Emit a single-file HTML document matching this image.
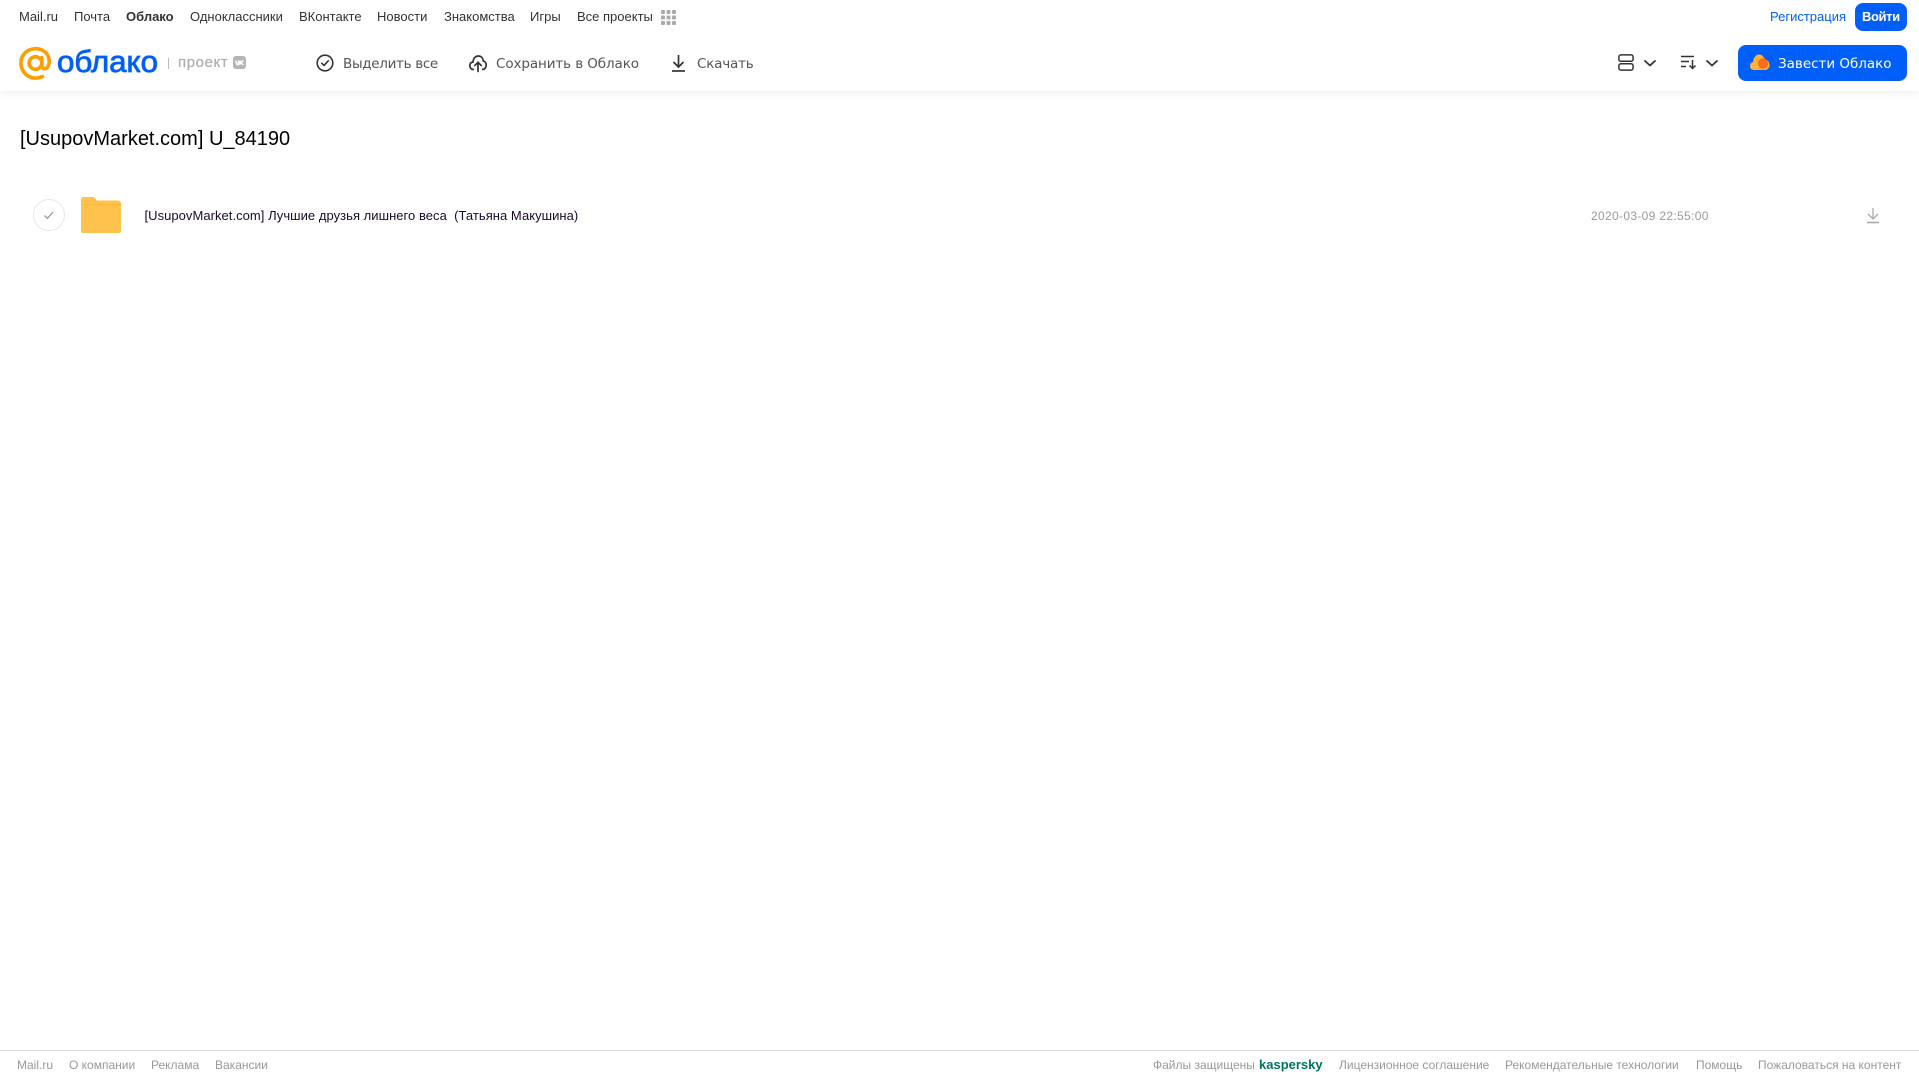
<!DOCTYPE html>
<html lang="ru"><head><meta charset="utf-8"><title>Облако</title>
<style>
html,body{margin:0;padding:0;background:#fff;overflow:hidden}
#p{position:relative;width:1919px;height:1079px;overflow:hidden;font-family:"Liberation Sans",sans-serif;background:#fff}
.t{position:absolute;white-space:pre;line-height:20px;height:20px}
.n{font-size:13px;color:#333;top:7px}
.a{color:#555;top:53.500px;font-family:"DejaVu Sans","Liberation Sans",sans-serif;font-size:13.5px;letter-spacing:-.02px}
.f{font-size:12px;color:#999;top:1055px}
svg{position:absolute;overflow:visible}
</style></head><body><div id="p">
<div style="position:absolute;left:0;top:0;width:1919px;height:91px;background:#fff;box-shadow:0 2px 8px rgba(0,0,0,.07)"></div>

<span class="t n" style="left:19px">Mail.ru</span>
<span class="t n" style="left:74px">Почта</span>
<span class="t n" style="left:126px;font-weight:bold">Облако</span>
<span class="t n" style="left:190px">Одноклассники</span>
<span class="t n" style="left:299px">ВКонтакте</span>
<span class="t n" style="left:377px">Новости</span>
<span class="t n" style="left:444px">Знакомства</span>
<span class="t n" style="left:530px">Игры</span>
<span class="t n" style="left:577px">Все проекты</span>
<svg style="left:661px;top:10px" width="15" height="15" fill="#aaa"><rect x="0" y="0" width="4" height="4" rx="1"/><rect x="5.5" y="0" width="4" height="4" rx="1"/><rect x="11" y="0" width="4" height="4" rx="1"/><rect x="0" y="5.500" width="4" height="4" rx="1"/><rect x="5.5" y="5.500" width="4" height="4" rx="1"/><rect x="11" y="5.500" width="4" height="4" rx="1"/><rect x="0" y="11" width="4" height="4" rx="1"/><rect x="5.5" y="11" width="4" height="4" rx="1"/><rect x="11" y="11" width="4" height="4" rx="1"/></svg>

<span class="t" style="left:1770px;top:7px;font-size:13px;color:#005ff9">Регистрация</span>
<div style="position:absolute;left:1855px;top:3px;width:52px;height:28px;border-radius:8px;background:#005ff9"></div>
<span class="t" style="left:1862px;top:7px;font-size:13px;color:#fff;font-weight:bold;letter-spacing:-.4px">Войти</span>

<!-- logo -->
<svg style="left:19px;top:47px" width="33" height="33" viewBox="0 0 33 33" fill="none">
<circle cx="16.500" cy="16" r="6.300" stroke="#ff9e00" stroke-width="3.600"/>
<path d="M22.800 10.500V18.500C22.800 22 27 23 29 19.500C31.500 14.500 30 8 25.500 4.500C19.500 0 10.500 1 5.500 6.500C0 12.500 1 22 7 27.500C11.500 31.500 18 32 23.500 29.500" stroke="#ff9e00" stroke-width="3.600" stroke-linecap="round"/>
</svg>
<svg style="left:57px;top:44px" width="104" height="38"><text x="0" y="28" font-family="Liberation Sans,sans-serif" font-size="31" fill="#005ff9" stroke="#005ff9" stroke-width=".8" textLength="101" lengthAdjust="spacingAndGlyphs">облако</text></svg>
<div style="position:absolute;left:168px;top:58px;width:1px;height:11px;background:#bbb"></div>
<span class="t" style="left:178px;top:53px;font-size:15px;color:#b0b0b0;letter-spacing:.6px;-webkit-text-stroke:.3px #b0b0b0">проект</span>
<div style="position:absolute;left:233px;top:56px;width:13px;height:13px;border-radius:3px;background:#b5b5b5"></div>
<svg style="left:233px;top:56px" width="13" height="13" fill="none" stroke="#fff" stroke-width="1.400"><path d="M2.500 4.500L4 8.500L5.500 8.500V4.500M10.500 4.500L7.500 6.500L10.500 8.800M7 4.500V8.800"/></svg>

<!-- toolbar -->
<svg style="left:316px;top:54px" width="18" height="18" fill="none" stroke="#333" stroke-width="1.600"><circle cx="9" cy="9" r="7.800"/><path d="M5.700 9.200L8 11.400L12.300 6.800" stroke-linecap="round" stroke-linejoin="round"/></svg>
<span class="t a" style="left:343px;letter-spacing:-.32px">Выделить все</span>
<svg style="left:469px;top:54px" width="18" height="18" fill="none" stroke="#333" stroke-width="1.700"><path d="M5 15.500H4.500C2 15.500 .8 13.500 .8 11.800C.8 9.800 2 8.300 4 8C4.300 4.300 6.500 2 9.300 2C12 2 14 4 14.300 7C16 7.300 17.200 9 17.200 11C17.200 13.500 15.800 15.500 13 15.500"/><path d="M9 17.500V8.500M5.800 11.500L9 8.300L12.200 11.500" stroke-linecap="round"/></svg>
<span class="t a" style="left:496px;letter-spacing:-.1px">Сохранить в Облако</span>
<svg style="left:671px;top:54px" width="15" height="18" fill="none" stroke="#333" stroke-width="1.700"><path d="M7.500 1V12.500M2.500 8L7.500 13L12.500 8"/><path d="M1 17H14"/></svg>
<span class="t a" style="left:697px;letter-spacing:-.2px">Скачать</span>

<!-- right controls -->
<svg style="left:1618px;top:54px" width="16" height="17" fill="none" stroke="#333" stroke-width="1.500"><rect x=".9" y=".9" width="14.200" height="6.400" rx="2"/><rect x=".9" y="9.700" width="14.200" height="6.400" rx="2"/></svg>
<svg style="left:1644px;top:60px" width="12" height="7" fill="none" stroke="#333" stroke-width="1.800" stroke-linecap="round" stroke-linejoin="round"><path d="M1 1L6 5.500L11 1"/></svg>
<svg style="left:1681px;top:55px" width="16" height="15" fill="none" stroke="#333" stroke-width="1.500"><path d="M0 1.500H13M0 6.500H8M0 11.500H5"/><path d="M11.500 5V13.500M8.500 10.500L11.500 13.500L14.500 10.500"/></svg>
<svg style="left:1706px;top:60px" width="12" height="7" fill="none" stroke="#333" stroke-width="1.800" stroke-linecap="round" stroke-linejoin="round"><path d="M1 1L6 5.500L11 1"/></svg>
<div style="position:absolute;left:1738px;top:45px;width:169px;height:36px;border-radius:8px;background:#005ff9"></div>
<svg style="left:1750px;top:54px" width="20" height="17"><path d="M4 16C1.500 16 0 14.200 0 12C0 10 1.200 8.500 3 8C3.500 3.500 6 .5 9 .5C12 .5 14 3 15 5.500C17.500 5.800 19.500 8 19.500 11C19.500 14 17.500 16 15 16Z" fill="#ffb13c"/><circle cx="13" cy="9.500" r="5.200" fill="#ff6a1f"/></svg>
<span class="t a" style="left:1778px;color:#fff">Завести Облако</span>

<!-- content -->
<span class="t" style="left:20px;top:126px;height:26px;line-height:26px;font-size:20px;color:#000">[UsupovMarket.com] U_84190</span>

<svg style="left:33px;top:199px" width="32" height="32" fill="none"><circle cx="16" cy="16" r="15.500" stroke="#e8e8e8"/><path d="M11.500 16.500L14.500 19.300L20 13" stroke="#999" stroke-width="1.300"/></svg>
<svg style="left:81px;top:197px" width="40" height="36"><path d="M0 3C0 1.300 1.300 0 3 0H11C13 0 14 .7 15 2.200L16 3.500H37C38.700 3.500 40 4.800 40 6.500V33C40 34.700 38.700 36 37 36H3C1.300 36 0 34.700 0 33Z" fill="#ffc24d"/><rect x="0" y="8" width="40" height="28" rx="2" fill="#ffc24d"/><path d="M0 7.500H40" stroke="#ffb638" stroke-width="1"/></svg>
<span class="t" style="left:144.500px;top:206px;font-size:13px;letter-spacing:.04px;color:#1a0a2e">[UsupovMarket.com] Лучшие друзья лишнего веса  (Татьяна Макушина)</span>
<span class="t" style="left:1591px;top:206px;font-size:12px;letter-spacing:.33px;color:#999">2020-03-09 22:55:00</span>
<svg style="left:1866px;top:207px" width="14" height="17" fill="none" stroke="#aaa" stroke-width="1.300"><path d="M7 1V11.500M2 7L7 12L12 7"/><path d="M1 15.500H13" stroke-width="1.600"/></svg>

<!-- footer -->
<div style="position:absolute;left:0;top:1050px;width:1919px;height:1px;background:#d9d9d9"></div>
<span class="t f" style="left:17px">Mail.ru</span>
<span class="t f" style="left:69px">О компании</span>
<span class="t f" style="left:151px">Реклама</span>
<span class="t f" style="left:215px">Вакансии</span>
<span class="t f" style="left:1153px">Файлы защищены</span>
<span class="t f" style="left:1259px;font-weight:bold;font-size:13px;color:#00745f">kaspersky</span>
<span class="t f" style="left:1339px">Лицензионное соглашение</span>
<span class="t f" style="left:1505px">Рекомендательные технологии</span>
<span class="t f" style="left:1696px">Помощь</span>
<span class="t f" style="left:1758px">Пожаловаться на контент</span>
</div></body></html>
